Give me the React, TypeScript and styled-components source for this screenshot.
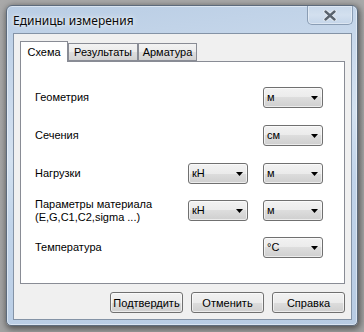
import { Fragment } from "react";
import styled, { createGlobalStyle } from "styled-components";

const GlobalStyle = createGlobalStyle`
  html, body {
    margin: 0;
    padding: 0;
  }
  body {
    width: 364px;
    height: 332px;
    overflow: hidden;
    background: linear-gradient(180deg, #a9a9a9 0%, #a2a2a2 100%);
    font-family: "Liberation Sans", Arial, sans-serif;
    font-size: 11px;
    color: #000;
  }
`;

const Desktop = styled.div`
  padding: 5px 6px 0 6px;
`;

const Window = styled.div`
  box-sizing: border-box;
  width: 352px;
  height: 321px;
  display: flex;
  flex-direction: column;
  padding: 0 5px 5px 6px;
  border: 1px solid #5d6b7c;
  border-radius: 6px 6px 5px 5px;
  background: linear-gradient(
    172deg,
    #b9cde4 0%,
    #cddcee 30%,
    #d3e1f0 42%,
    #c1d4ea 60%,
    #b7cbe3 100%
  );
  box-shadow: inset 0 0 0 1px rgba(255, 255, 255, 0.45),
    1px 2px 6px 1px rgba(0, 0, 0, 0.5);
`;

const TitleBar = styled.div`
  height: 27px;
  display: flex;
  align-items: center;
  justify-content: space-between;
`;

const Title = styled.span`
  font-family: "Noto Sans", "Open Sans", sans-serif;
  font-size: 12px;
  color: #0a0a0a;
  text-shadow: 0 0 6px rgba(255, 255, 255, 0.9), 0 0 3px rgba(255, 255, 255, 0.8);
  margin-top: 1px;
`;

const CloseButton = styled.div`
  align-self: flex-start;
  box-sizing: border-box;
  width: 46px;
  height: 19px;
  margin-right: -1px;
  display: flex;
  align-items: center;
  justify-content: center;
  border: 1px solid #8a9db4;
  border-top: none;
  border-radius: 0 0 5px 5px;
  background: linear-gradient(180deg, #c8d8ea 0%, #d3e0ef 50%, #c4d5e9 100%);
  box-shadow: inset 0 0 0 1px rgba(255, 255, 255, 0.4);
`;

const Client = styled.div`
  flex: 1;
  display: flex;
  flex-direction: column;
  padding: 7px 6px 6px 6px;
  border: 1px solid #8493a6;
  background: #f0f0f0;
`;

const TabStrip = styled.div`
  height: 20px;
  display: flex;
  align-items: flex-end;
`;

const Tab = styled.div<{ $active?: boolean; $w: number }>`
  box-sizing: border-box;
  width: ${(p) => p.$w}px;
  height: ${(p) => (p.$active ? 21 : 18)}px;
  margin-bottom: ${(p) => (p.$active ? -1 : 0)}px;
  position: relative;
  z-index: ${(p) => (p.$active ? 1 : 0)};
  display: flex;
  align-items: center;
  justify-content: center;
  padding-bottom: ${(p) => (p.$active ? 1 : 0)}px;
  border: 1px solid #898c95;
  border-bottom: ${(p) => (p.$active ? "none" : "1px solid #898c95")};
  background: ${(p) =>
    p.$active
      ? "#ffffff"
      : "linear-gradient(180deg, #f3f3f3 0%, #ebebeb 50%, #dedede 50%, #d2d2d2 100%)"};
`;

const Pane = styled.div`
  box-sizing: border-box;
  height: 223px;
  padding: 25px 21px 0 14px;
  border: 1px solid #898c95;
  background: #ffffff;
  display: grid;
  grid-template-columns: 1fr 60px 60px;
  grid-template-rows: 38px 38px 37px 37px 21px;
  column-gap: 15px;
  align-items: start;
`;

const Label = styled.div<{ $row: number }>`
  grid-column: 1;
  grid-row: ${(p) => p.$row};
  height: 21px;
  display: flex;
  align-items: center;
  line-height: 13px;
  white-space: pre;
`;

const Combo = styled.div<{ $col: number; $row: number }>`
  grid-column: ${(p) => p.$col};
  grid-row: ${(p) => p.$row};
  box-sizing: border-box;
  height: 21px;
  display: flex;
  align-items: center;
  justify-content: space-between;
  padding: 0 4px 0 3px;
  border: 1px solid #707070;
  border-radius: 3px;
  background: linear-gradient(180deg, #f2f2f2 0%, #ebebeb 50%, #dddddd 50%, #cfcfcf 100%);
  box-shadow: inset 0 0 0 1px rgba(255, 255, 255, 0.6);
`;

const ComboText = styled.span`
  font-size: 11px;
  line-height: 13px;
`;

const ButtonRow = styled.div`
  margin-top: 8px;
  display: flex;
  justify-content: flex-end;
  gap: 8px;
`;

const Button = styled.div`
  box-sizing: border-box;
  width: 73px;
  height: 21px;
  display: flex;
  align-items: center;
  justify-content: center;
  border: 1px solid #707070;
  border-radius: 3px;
  background: linear-gradient(180deg, #f2f2f2 0%, #ebebeb 50%, #dddddd 50%, #cfcfcf 100%);
  box-shadow: inset 0 0 0 1px rgba(255, 255, 255, 0.6);
`;

function Arrow() {
  return (
    <svg width="7" height="4" viewBox="0 0 7 4">
      <path d="M0 0 H7 L3.5 4 Z" fill="#000" />
    </svg>
  );
}

function Select({ value, col, row }: { value: string; col: number; row: number }) {
  return (
    <Combo $col={col} $row={row}>
      <ComboText>{value}</ComboText>
      <Arrow />
    </Combo>
  );
}

function CloseGlyph() {
  return (
    <svg width="14" height="11" viewBox="0 0 14 11">
      <path d="M2.5 1.5 L11.5 9.5 M11.5 1.5 L2.5 9.5" stroke="#ffffff" strokeWidth="4" strokeLinecap="round" opacity="0.7" />
      <path d="M2.5 1.5 L11.5 9.5 M11.5 1.5 L2.5 9.5" stroke="#59636e" strokeWidth="2.4" strokeLinecap="round" />
    </svg>
  );
}

const rows = [
  { label: "Геометрия", left: null, right: "м" },
  { label: "Сечения", left: null, right: "см" },
  { label: "Нагрузки", left: "кН", right: "м" },
  { label: "Параметры материала\n(E,G,C1,C2,sigma ...)", left: "кН", right: "м" },
  { label: "Температура", left: null, right: "°C" },
];

export default function App() {
  return (
    <>
      <GlobalStyle />
      <Desktop>
        <Window>
          <TitleBar>
            <Title>Единицы измерения</Title>
            <CloseButton>
              <CloseGlyph />
            </CloseButton>
          </TitleBar>
          <Client>
            <TabStrip>
              <Tab $active $w={48}>Схема</Tab>
              <Tab $w={70}>Результаты</Tab>
              <Tab $w={59}>Арматура</Tab>
            </TabStrip>
            <Pane>
              {rows.map((r, i) => (
                <Fragment key={i}>
                  <Label $row={i + 1}>{r.label}</Label>
                  {r.left && <Select value={r.left} col={2} row={i + 1} />}
                  <Select value={r.right} col={3} row={i + 1} />
                </Fragment>
              ))}
            </Pane>
            <ButtonRow>
              <Button>Подтвердить</Button>
              <Button>Отменить</Button>
              <Button>Справка</Button>
            </ButtonRow>
          </Client>
        </Window>
      </Desktop>
    </>
  );
}
